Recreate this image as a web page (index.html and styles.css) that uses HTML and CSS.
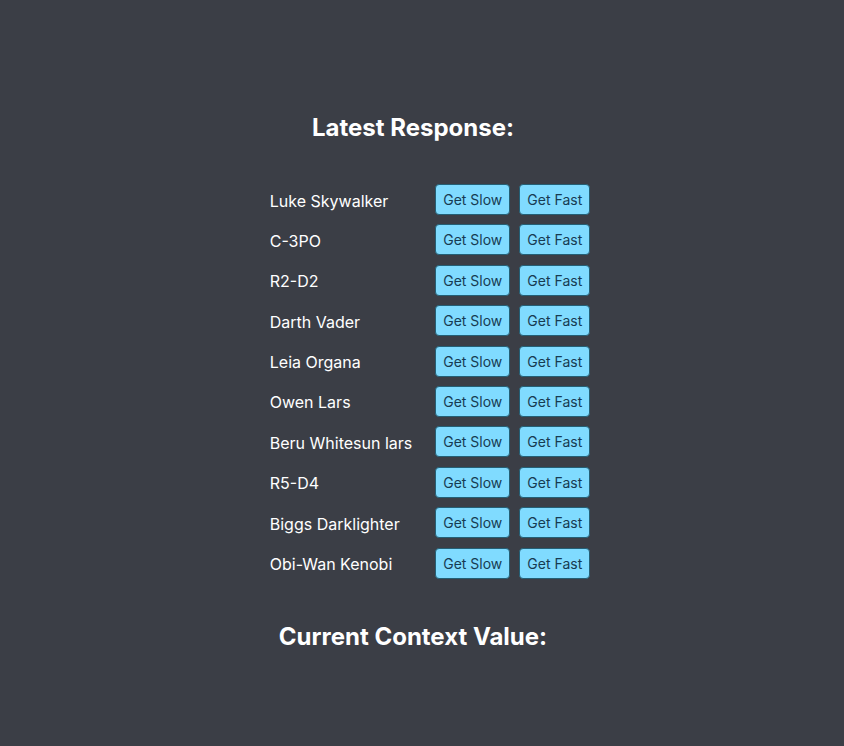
FILE: index.html
```html
<!DOCTYPE html>
<html lang="en">
<head>
    <meta charset="UTF-8">
    <meta name="viewport" content="width=device-width, initial-scale=1.0">
    <title>Star Wars People</title>
    <link rel="stylesheet" href="styles.css">
</head>
<body>
    <main class="app">
        <h1 class="title">Latest Response:</h1>

        <div class="people">
            <div class="person">Luke Skywalker</div>
            <button class="btn">Get Slow</button>
            <button class="btn">Get Fast</button>

            <div class="person">C-3PO</div>
            <button class="btn">Get Slow</button>
            <button class="btn">Get Fast</button>

            <div class="person">R2-D2</div>
            <button class="btn">Get Slow</button>
            <button class="btn">Get Fast</button>

            <div class="person">Darth Vader</div>
            <button class="btn">Get Slow</button>
            <button class="btn">Get Fast</button>

            <div class="person">Leia Organa</div>
            <button class="btn">Get Slow</button>
            <button class="btn">Get Fast</button>

            <div class="person">Owen Lars</div>
            <button class="btn">Get Slow</button>
            <button class="btn">Get Fast</button>

            <div class="person">Beru Whitesun lars</div>
            <button class="btn">Get Slow</button>
            <button class="btn">Get Fast</button>

            <div class="person">R5-D4</div>
            <button class="btn">Get Slow</button>
            <button class="btn">Get Fast</button>

            <div class="person">Biggs Darklighter</div>
            <button class="btn">Get Slow</button>
            <button class="btn">Get Fast</button>

            <div class="person">Obi-Wan Kenobi</div>
            <button class="btn">Get Slow</button>
            <button class="btn">Get Fast</button>
        </div>

        <h1 class="title title-context">Current Context Value:</h1>
    </main>
</body>
</html>
```

FILE: styles.css
```css
* {
    margin: 0;
    padding: 0;
    box-sizing: border-box;
}

body {
    font-family: Inter, 'Noto Sans', sans-serif;
    background: #3b3e46;
    color: #ffffff;
    min-height: 100vh;
}

.app {
    display: flex;
    flex-direction: column;
    align-items: center;
    padding-top: 113px;
}

.title {
    font-size: 24px;
    font-weight: 700;
    line-height: 29px;
    margin-right: 18px;
}

.title-context {
    margin-top: 43px;
}

.people {
    display: grid;
    grid-template-columns: auto auto auto;
    column-gap: 9px;
    row-gap: 9.4px;
    align-items: center;
    margin-top: 42px;
    margin-left: 16px;
}

.person {
    font-size: 16px;
    padding-top: 2px;
    padding-right: 14px;
}

.btn {
    font-family: inherit;
    font-size: 14px;
    height: 31px;
    padding: 0 7px;
    color: #173b52;
    background: #80dbff;
    border: 1px solid #245f75;
    border-radius: 4px;
    cursor: pointer;
}

.btn:hover {
    background: #9be3ff;
}
```
